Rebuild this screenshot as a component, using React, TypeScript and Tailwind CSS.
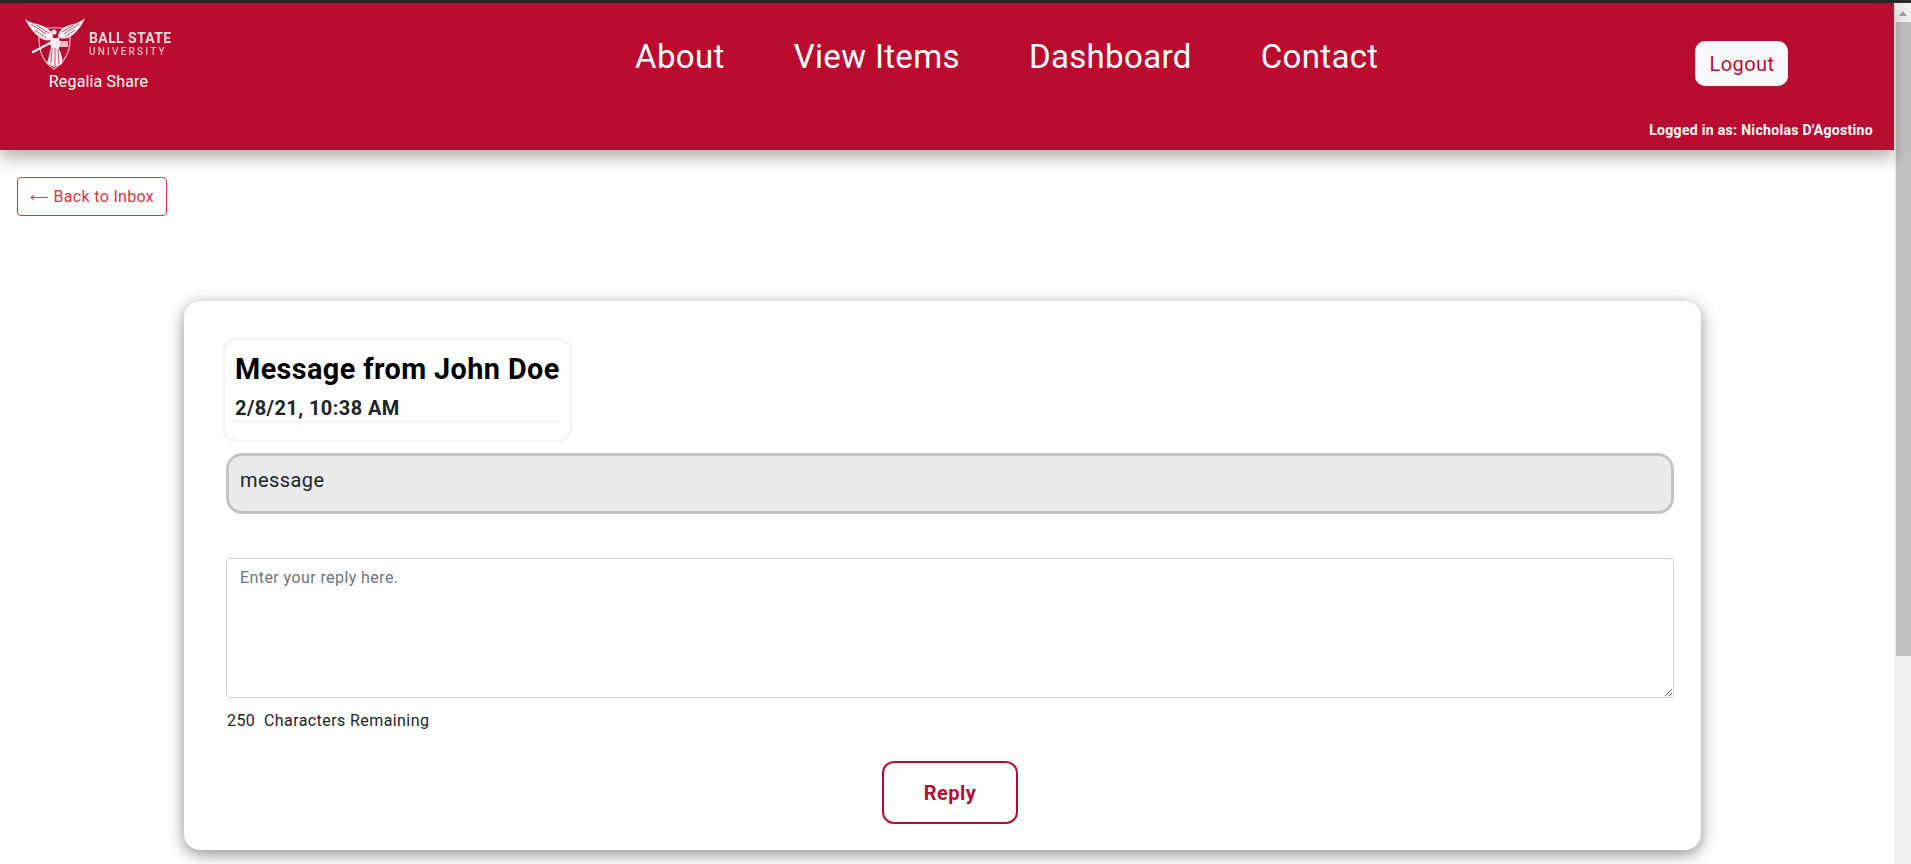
import { useState } from "react";

const BRAND = "#ba0c2f";

const Emblem = () => (
  <svg viewBox="0 0 62 54" className="w-[62px] h-[54px] blur-[0.35px]" aria-hidden="true">
    {/* shield outline */}
    <path
      d="M14 20 L14 12 C22 9 37 9 45 12 L45 22 C45 34 39 45 29 51 C19 45 14 34 14 20 Z"
      fill="none"
      stroke="#fff"
      strokeOpacity="0.75"
      strokeWidth="1.2"
    />
    {/* wings */}
    <path d="M0 1 C6 6 13 5 20 9 C25 12 28 15 28 20 C26 23 21 23 17 21 C10 17 4 9 0 1 Z" fill="#fff" fillOpacity="0.95" />
    <path d="M60 0 C57 8 51 15 45 19 C41 21 36 21 33 19 C33 14 37 10 42 8 C48 6 55 5 60 0 Z" fill="#fff" fillOpacity="0.95" />
    {/* feathers */}
    <path d="M6 6 L21 16 M11 7 L24 15 M10 12 L21 20" stroke={BRAND} strokeWidth="0.7" />
    <path d="M54 6 L39 16 M49 7 L37 14 M50 12 L40 19" stroke={BRAND} strokeWidth="0.7" />
    {/* figure */}
    <circle cx="29" cy="14" r="2.6" fill="#fff" fillOpacity="0.9" />
    <path
      d="M26 20 L34 20 C36 25 35 28 34 31 C37 37 38 42 37 46 L29 49 L22 45 C24 39 25 33 26 29 C25 26 25 23 26 20 Z"
      fill="#fff"
      fillOpacity="0.92"
    />
    <path d="M27 30 L26 45 M30 30 L30 48 M33 31 L34 46" stroke={BRAND} strokeWidth="0.7" />
    {/* sword and book */}
    <path d="M8 34 L27 24" stroke="#fff" strokeWidth="2" strokeLinecap="round" />
    <path d="M35 23 L43 23 L43 29 L35 29 Z" fill="#fff" fillOpacity="0.75" />
  </svg>
);

const Logo = () => (
  <div className="flex flex-col w-[147px] ml-[25px] mt-[15px]">
    <div className="flex items-start">
      <Emblem />
      <div className="ml-[2px] mt-[13px] whitespace-nowrap font-bold blur-[0.3px]">
        <div className="text-[14px] leading-[14px] tracking-[0.4px] text-white/85">BALL STATE</div>
        <div className="text-[10px] leading-[10px] font-medium tracking-[2.2px] mt-[2px] text-white/70">UNIVERSITY</div>
      </div>
    </div>
    <div className="text-white text-base leading-6 tracking-[0.01em] text-center -mt-[2px]">Regalia Share</div>
  </div>
);

const Navbar = () => (
  <header className="relative z-10 h-[147px] bg-[#ba0c2f] shadow-[0_8px_16px_rgba(0,0,0,0.3)] flex flex-col">
    <div className="flex items-start">
      <Logo />
      <nav className="flex gap-[69px] ml-[463px] mt-[32px] text-[33px] leading-[44px] tracking-[0.35px] text-white">
        <a>About</a>
        <a>View Items</a>
        <a>Dashboard</a>
        <a>Contact</a>
      </nav>
      <button className="ml-[317px] mt-[38px] w-[93px] h-[45px] rounded-[10px] bg-[#f8f9fa] text-[20px] text-[#ba0c2f]">
        Logout
      </button>
    </div>
    <div className="mt-auto mb-[10px] pr-[21px] text-right text-sm leading-5 tracking-[0.023em] font-bold text-white">
      Logged in as: Nicholas D'Agostino
    </div>
  </header>
);

const Scrollbar = () => (
  <aside className="w-[17px] shrink-0 bg-[#f1f1f1] flex flex-col items-stretch">
    <div className="h-[19px] flex items-center justify-center pt-[2px]">
      <div className="w-0 h-0 border-x-[4px] border-x-transparent border-b-[5px] border-b-[#a3a3a3]" />
    </div>
    <div className="h-[634px] ml-[2px] bg-[#c1c1c1]" />
  </aside>
);

export default function App() {
  const [reply, setReply] = useState("");

  return (
    <div className="h-screen overflow-hidden bg-white font-['Roboto',sans-serif] tracking-[0.026em] text-[#212529] flex flex-col">
      <div className="h-[3px] shrink-0 bg-[#2b2b2b]" />
      <div className="flex flex-1 min-h-0">
        <main className="flex-1 min-w-0">
          <Navbar />

          <div className="pl-[17px] pt-[27px]">
            <button className="w-[150px] h-[39px] rounded border border-[#dc3545] text-base tracking-[0.02em] text-[#dc3545] whitespace-nowrap">
              <span className="text-[13px]">⟵</span> Back to Inbox
            </button>
          </div>

          {/* Message card */}
          <section className="ml-[184px] mt-[85px] w-[1517px] h-[549px] bg-white rounded-2xl shadow-[0_4px_16px_rgba(0,0,0,0.45)] pt-[36px] pl-[42px] pr-[27px]">
            <div className="w-fit ml-[-4px] h-[106px] border-[3px] border-[#f6f6f6] rounded-2xl px-[10px] pt-[11px]">
              <h1 className="text-[28.8px] leading-[36px] font-bold text-black whitespace-nowrap">
                Message from John Doe
              </h1>
              <div className="text-[20px] leading-[28px] font-bold border-b border-[#e9e9e9] h-[35px] pt-[7px]">
                2/8/21, 10:38 AM
              </div>
            </div>

            <div className="mt-[10px] h-[61px] bg-[#eaeaea] border-[3px] border-[#c4c4c4] rounded-2xl px-[11px] pt-[11px] text-[20px] leading-[27px]">
              message
            </div>

            <textarea
              value={reply}
              onChange={(e) => setReply(e.target.value)}
              placeholder="Enter your reply here."
              className="block mt-[44px] w-full h-[140px] rounded border border-[#ced4da] px-[13px] py-[7px] text-base leading-6 placeholder:text-[#6c757d] outline-none"
            />
            <div className="mt-[11px] ml-[1px] text-base leading-6">
              250&nbsp;&nbsp;Characters Remaining
            </div>

            <div className="flex justify-center mt-[28px]">
              <button
                className="w-[136px] h-[63px] rounded-xl border-2 bg-white text-[20px] font-bold"
                style={{ borderColor: BRAND, color: BRAND }}
              >
                Reply
              </button>
            </div>
          </section>
        </main>
        <Scrollbar />
      </div>
    </div>
  );
}
